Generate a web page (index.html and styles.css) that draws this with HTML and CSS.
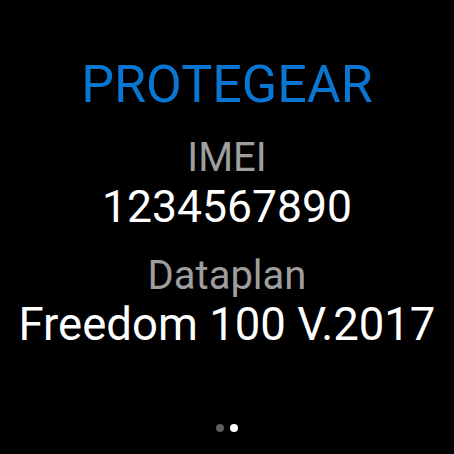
FILE: index.html
```html
<!DOCTYPE html>
<html lang="en">
<head>
    <meta charset="UTF-8">
    <meta name="viewport" content="width=device-width, initial-scale=1.0">
    <title>Protegear Info</title>
    <link rel="stylesheet" href="styles.css">
</head>
<body>
    <div class="screen">
        <div class="brand">PROTEGEAR</div>
        <div class="field field-imei">
            <div class="label">IMEI</div>
            <div class="value value-imei">1234567890</div>
        </div>
        <div class="field field-plan">
            <div class="label">Dataplan</div>
            <div class="value value-plan">Freedom 100 V.2017</div>
        </div>
        <div class="pager">
            <span class="dot"></span>
            <span class="dot active"></span>
        </div>
    </div>
</body>
</html>
```

FILE: styles.css
```css
html, body { margin: 0; padding: 0; background-color: #000; }
body { font-family: Roboto, "Liberation Sans", sans-serif; }
.screen { width: 454px; height: 454px; display: flex; flex-direction: column; align-items: center; box-sizing: border-box; padding-top: 55px; }
.brand { color: #0a76d2; font-size: 52px; line-height: 60px; }
.field { display: flex; flex-direction: column; align-items: center; }
.field-imei { margin-top: 19px; }
.field-plan { margin-top: 20px; }
.label { color: #9e9e9e; font-size: 40px; line-height: 48px; }
.value { color: #fff; line-height: 50px; white-space: nowrap; }
.value-imei { font-size: 44.5px; }
.value-plan { font-size: 45.5px; }
.pager { display: flex; gap: 6px; margin-top: auto; margin-bottom: 22px; }
.dot { width: 8px; height: 8px; border-radius: 50%; background-color: #5c5c5c; }
.dot.active { background-color: #fff; }
```
